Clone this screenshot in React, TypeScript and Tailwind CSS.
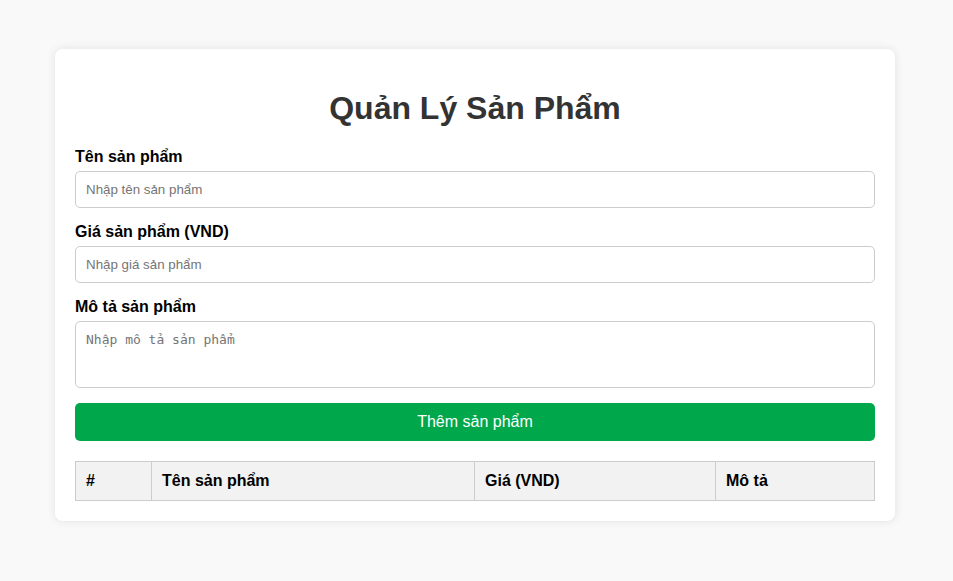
import { useState } from 'react';

type Product = { name: string; price: string; desc: string };

export default function App() {
  const [name, setName] = useState('');
  const [price, setPrice] = useState('');
  const [desc, setDesc] = useState('');
  const [products, setProducts] = useState<Product[]>([]);

  const addProduct = () => {
    if (!name.trim()) return;
    setProducts([...products, { name, price, desc }]);
    setName('');
    setPrice('');
    setDesc('');
  };

  return (
    <div className="min-h-screen bg-[#f9f9f9] pt-[49px] pb-10 font-['Liberation_Sans',Arial,sans-serif]">
      <div className="ml-[55px] w-[840px] rounded-lg bg-white p-5 shadow-[0_0_10px_rgba(0,0,0,0.1)]">
        <h1 className="mt-5 mb-[21px] pt-px text-center text-[32px] leading-[36px] font-bold text-[#333]">
          Quản Lý Sản Phẩm
        </h1>

        <label className="mb-[6px] block pt-px text-base leading-[17px] font-bold text-black">
          Tên sản phẩm
        </label>
        <input
          value={name}
          onChange={(e) => setName(e.target.value)}
          placeholder="Nhập tên sản phẩm"
          className="mb-[14px] block h-[37px] w-full rounded-[5px] border border-[#ccc] px-[10px] text-[13.33px] placeholder:text-[#757575] focus:outline-none"
        />

        <label className="mb-[6px] block pt-px text-base leading-[17px] font-bold text-black">
          Giá sản phẩm (VND)
        </label>
        <input
          value={price}
          onChange={(e) => setPrice(e.target.value)}
          placeholder="Nhập giá sản phẩm"
          className="mb-[14px] block h-[37px] w-full rounded-[5px] border border-[#ccc] px-[10px] text-[13.33px] placeholder:text-[#757575] focus:outline-none"
        />

        <label className="mb-[6px] block pt-px text-base leading-[17px] font-bold text-black">
          Mô tả sản phẩm
        </label>
        <textarea
          value={desc}
          onChange={(e) => setDesc(e.target.value)}
          placeholder="Nhập mô tả sản phẩm"
          className="mb-[15px] block h-[67px] w-full resize-none rounded-[5px] border border-[#ccc] px-[10px] py-[10px] font-['DejaVu_Sans_Mono','Liberation_Mono',monospace] text-[13px] leading-[16px] placeholder:text-[#757575] focus:outline-none"
        />

        <button
          onClick={addProduct}
          className="mb-5 block h-[38px] w-full rounded-[5px] bg-[#00a84b] text-base text-white hover:bg-[#009442]"
        >
          Thêm sản phẩm
        </button>

        <table className="w-full border-collapse text-left text-base text-black">
          <thead>
            <tr className="bg-[#f2f2f2]">
              <th className="w-[76px] border border-[#ccc] px-[10px] py-[10px] leading-[18px] font-bold">#</th>
              <th className="w-[323px] border border-[#ccc] px-[10px] py-[10px] leading-[18px] font-bold">Tên sản phẩm</th>
              <th className="w-[241px] border border-[#ccc] px-[10px] py-[10px] leading-[18px] font-bold">Giá (VND)</th>
              <th className="border border-[#ccc] px-[10px] py-[10px] leading-[18px] font-bold">Mô tả</th>
            </tr>
          </thead>
          <tbody>
            {products.map((p, i) => (
              <tr key={i}>
                <td className="border border-[#ccc] p-[10px]">{i + 1}</td>
                <td className="border border-[#ccc] p-[10px]">{p.name}</td>
                <td className="border border-[#ccc] p-[10px]">{p.price}</td>
                <td className="border border-[#ccc] p-[10px]">{p.desc}</td>
              </tr>
            ))}
          </tbody>
        </table>
      </div>
    </div>
  );
}
